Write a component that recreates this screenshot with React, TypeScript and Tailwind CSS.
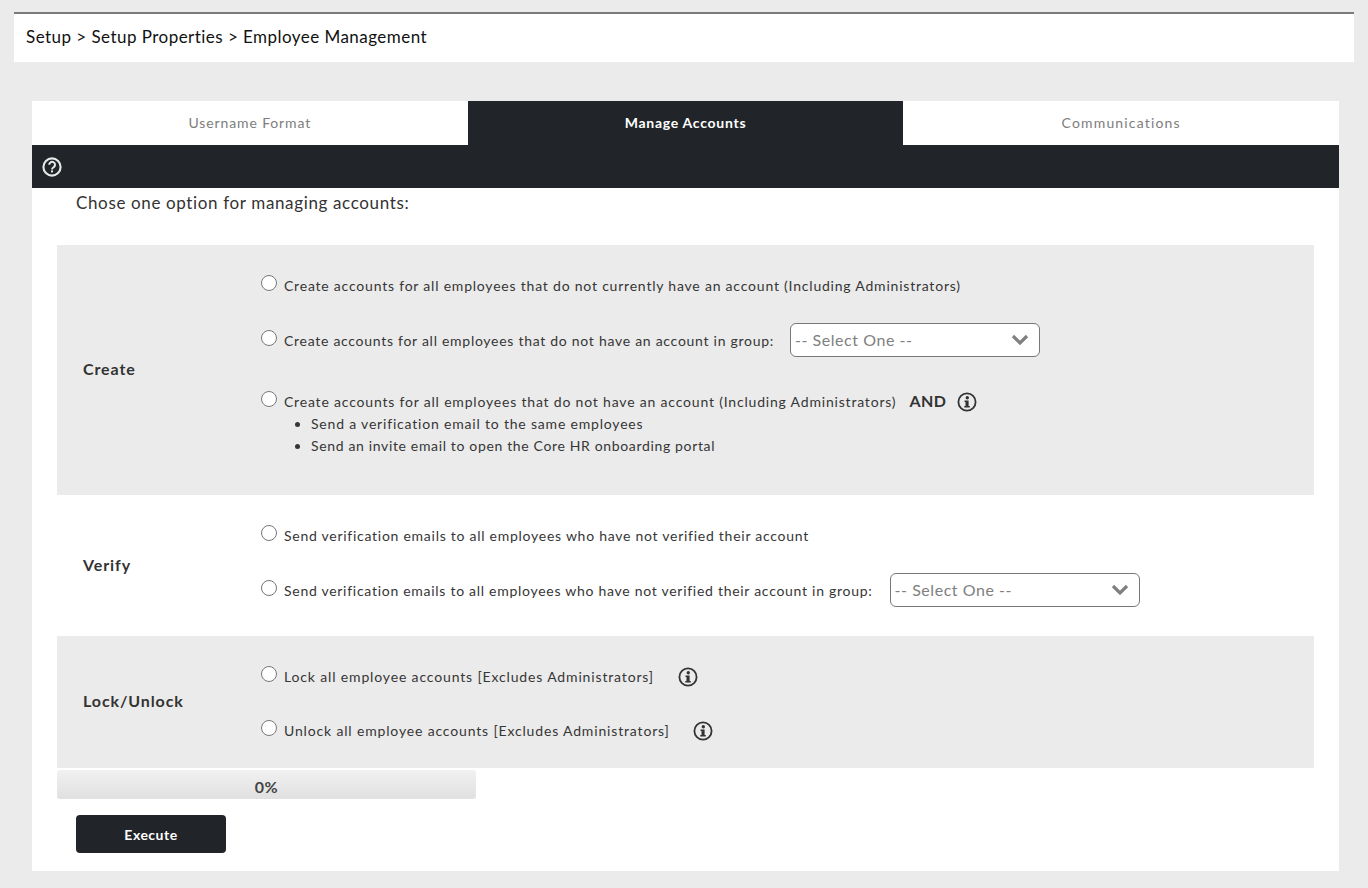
const font = { fontFamily: '"Lato", "Liberation Sans", sans-serif' };

function InfoIcon() {
  return (
    <svg width="20" height="20" viewBox="0 0 20 20" className="shrink-0">
      <circle cx="10" cy="10" r="8.6" fill="none" stroke="#333" strokeWidth="1.8" />
      <circle cx="10.3" cy="5.8" r="1.7" fill="#333" />
      <path d="M7.5 8.4h4.1v5.6h1.2v1.6H7.3V14h1.2v-4h-1z" fill="#333" />
    </svg>
  );
}

function HelpIcon() {
  return (
    <svg width="20" height="20" viewBox="0 0 20 20">
      <circle cx="10" cy="10" r="8.6" fill="none" stroke="#e8e8e8" strokeWidth="2.1" />
      <path d="M7.2 7.8a2.9 2.9 0 1 1 4.6 2.3c-1.1.8-1.8 1.2-1.8 2.5" fill="none" stroke="#e8e8e8" strokeWidth="2" />
      <rect x="9" y="13.4" width="2" height="2" fill="#e8e8e8" />
    </svg>
  );
}

function Option({ name, text, tracking, children }: { name: string; text: string; tracking: string; children?: React.ReactNode }) {
  return (
    <div className="flex items-center min-h-[24px]">
      <input type="radio" name={name} className="w-4 h-4 m-0 mb-[6px] mr-[7px] shrink-0 accent-[#555]" />
      <span className={`text-[14px] leading-[24px] text-[#363636] whitespace-nowrap ${tracking}`}>{text}</span>
      {children}
    </div>
  );
}

function SelectBox({ className }: { className: string }) {
  return (
    <div className={`relative w-[250px] h-[34px] -translate-y-px ${className}`}>
      <select className="w-full h-full appearance-none bg-white border border-[#777] rounded-[6px] pl-[4px] text-[16px] tracking-[0.55px] text-[#808080]">
        <option>-- Select One --</option>
      </select>
      <svg width="18" height="12" viewBox="0 0 18 12" className="absolute right-[11px] top-[11px] pointer-events-none">
        <path d="M2 2l7 7 7-7" fill="none" stroke="#808080" strokeWidth="3.2" />
      </svg>
    </div>
  );
}

function Section({ label, className, bodyClass, children }: { label: string; className: string; bodyClass: string; children: React.ReactNode }) {
  return (
    <div className={`flex items-center ${className}`}>
      <div className="w-[204px] shrink-0 pl-[26px] pb-[2px] text-[16px] font-bold tracking-[0.9px] text-[#333]">{label}</div>
      <div className={`flex flex-col flex-1 ${bodyClass}`}>{children}</div>
    </div>
  );
}

export default function App() {
  return (
    <div style={font} className="min-h-screen w-[1368px] bg-[#ebebeb] pt-[12px] pb-[17px]">
      <div className="mx-[14px] h-[50px] bg-white border-t-2 border-[#7b7b7b] pl-[12px] pb-[2px] flex items-center text-[17px] tracking-[0.46px] text-[#111]">
        Setup &gt; Setup Properties &gt; Employee Management
      </div>

      <div className="ml-[32px] mr-[29px] mt-[39px] bg-white">
        <div className="grid grid-cols-3 h-[44px] text-[14px] text-[#7d7d7d]">
          <div className="flex items-center justify-center pb-[2px] tracking-[0.87px]">Username Format</div>
          <div className="flex items-center justify-center pb-[2px] tracking-[0.73px] bg-[#212428] text-white font-bold">Manage Accounts</div>
          <div className="flex items-center justify-center pb-[2px] tracking-[1.17px]">Communications</div>
        </div>
        <div className="h-[43px] bg-[#212428] flex items-center pl-[10px]">
          <HelpIcon />
        </div>

        <div className="pl-[44px] h-[57px] pt-[3px] text-[17px] leading-[24px] tracking-[0.64px] text-[#333]">
          Chose one option for managing accounts:
        </div>

        <div className="mx-[25px] pb-[18px]">
          <Section label="Create" className="h-[250px] bg-[#ebebeb]" bodyClass="pb-[10px]">
            <Option name="action" tracking="tracking-[0.79px]" text="Create accounts for all employees that do not currently have an account (Including Administrators)" />
            <div className="mt-[26px]">
              <Option name="action" tracking="tracking-[0.72px]" text="Create accounts for all employees that do not have an account in group:">
                <SelectBox className="ml-[16px]" />
              </Option>
            </div>
            <div className="mt-[31px]">
              <Option name="action" tracking="tracking-[0.81px]" text="Create accounts for all employees that do not have an account (Including Administrators)">
                <span className="ml-[13px] mr-[11px] pb-[2px] text-[16px] font-bold tracking-[0.5px] text-[#333]">AND</span>
                <InfoIcon />
              </Option>
            </div>
            <ul className="list-disc pl-[50px] -mt-[2px] text-[14px] leading-[22px] text-[#363636]">
              <li className="tracking-[0.81px]">Send a verification email to the same employees</li>
              <li className="tracking-[0.65px]">Send an invite email to open the Core HR onboarding portal</li>
            </ul>
          </Section>

          <Section label="Verify" className="h-[141px] bg-white" bodyClass="pt-[1px]">
            <Option name="action" tracking="tracking-[0.735px]" text="Send verification emails to all employees who have not verified their account" />
            <div className="mt-[26px]">
              <Option name="action" tracking="tracking-[0.72px]" text="Send verification emails to all employees who have not verified their account in group:">
                <SelectBox className="ml-[17px]" />
              </Option>
            </div>
          </Section>

          <Section label="Lock/Unlock" className="h-[132px] bg-[#ebebeb]" bodyClass="pt-[4px]">
            <Option name="action" tracking="tracking-[0.85px]" text="Lock all employee accounts [Excludes Administrators]">
              <span className="ml-[24px]"><InfoIcon /></span>
            </Option>
            <div className="mt-[30px]">
              <Option name="action" tracking="tracking-[0.84px]" text="Unlock all employee accounts [Excludes Administrators]">
                <span className="ml-[23px]"><InfoIcon /></span>
              </Option>
            </div>
          </Section>

          <div className="mt-[2px] w-[419px] h-[29px] rounded-[3px] bg-gradient-to-b from-[#f1f1f1] to-[#e0e0e0] flex items-center justify-center pt-[5px] text-[16px] font-bold tracking-[0.6px] text-[#444]">
            0%
          </div>

          <button className="mt-[16px] ml-[19px] block w-[150px] h-[38px] rounded-[4px] bg-[#212428] text-white text-[14px] font-bold tracking-[0.5px]">
            Execute
          </button>
        </div>
      </div>
    </div>
  );
}
